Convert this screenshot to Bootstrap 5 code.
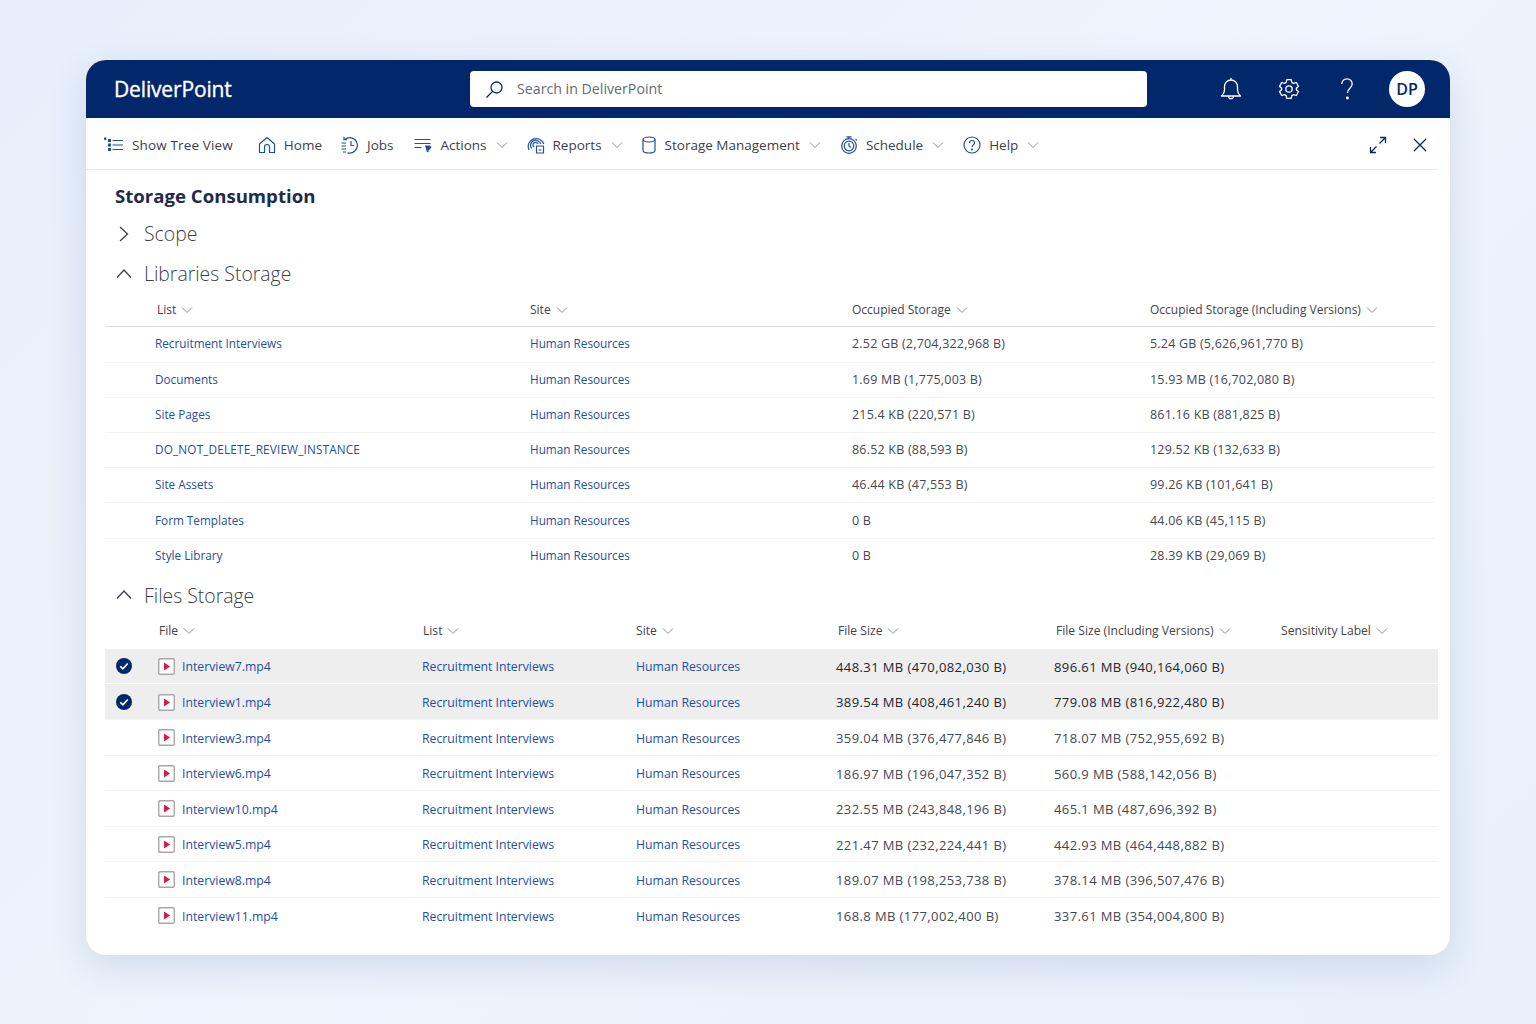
<!DOCTYPE html>
<html lang="en">

<head>
    <meta charset="UTF-8">
    <meta name="viewport" content="width=device-width, initial-scale=1.0">
    <title>DeliverPoint - Storage Consumption</title>
    <link href="https://cdn.jsdelivr.net/npm/bootstrap@5.3.0/dist/css/bootstrap.min.css" rel="stylesheet">
    <style>
        html, body { height: 100%; }
        body {
            margin: 0;
            background: linear-gradient(135deg, #e6effb 0%, #eef4fc 50%, #e7f0fb 100%);
            font-family: "Open Sans", "Noto Sans", "Liberation Sans", sans-serif;
            color: #3a3f4a;
            overflow: hidden;
        }
        .stage { padding: 60px 86px 0; }
        .app-window {
            height: 895px;
            background: #fff;
            border-radius: 20px;
            overflow: hidden;
            box-shadow: 0 12px 36px rgba(60, 95, 150, .16);
        }
        .top-bar { height: 58px; background: #03276b; padding: 0 25px 0 28px; }
        .brand-name { width: 356px; padding-top: 1px; font-size: 21px; font-weight: 500; color: #fff; letter-spacing: -.15px; -webkit-text-stroke: .35px #fff; }
        .search-box {
            width: 677px; height: 36px; background: #fff; border-radius: 4px;
            padding-left: 15px; gap: 13px; font-size: 14.2px; color: #666b73;
        }
        .top-icons { margin-left: auto; gap: 34px; }
        .avatar {
            width: 36px; height: 36px; border-radius: 50%; background: #fff; color: #03276b;
            font-size: 16px; font-weight: 600; margin-left: -4px;
        }
        .tool-bar {
            height: 52px; margin-right: 12px; padding: 3px 10px 0 18px;
            border-bottom: 1px solid #e8e8e8; font-size: 13.5px; color: #3a3f4a;
        }
        .tool-item { gap: 8px; white-space: nowrap; }
        .tree-label { letter-spacing: .14px; }
        .tool-gap-0 { margin-right: 25px; }
        .tool-gap-home { margin-right: 19px; }
        .tool-gap-jobs { margin-right: 21px; }
        .tool-gap-18 { margin-right: 18px; }
        .tool-gap-19 { margin-right: 19px; }
        .drop-caret { margin-left: 1px; }
        .tool-right { margin-left: auto; gap: 25px; }
        .page-body { padding: 0 12px 0 19px; }
        .page-title { margin: 13px 0 0 10px; font-size: 18.6px; line-height: 26px; font-weight: 700; color: #1f2b4a; }
        .section-head { height: 40px; padding-left: 11px; gap: 12px; font-size: 19.4px; font-weight: 300; color: #3c4049; }
        .section-scope { margin-top: 5px; }
        .section-files { margin-top: 2px; }
        .data-grid { table-layout: fixed; margin: 0; font-size: 12px; color: #444952; border-collapse: collapse; }
        .data-grid th { font-weight: 400; vertical-align: middle; padding: 0; white-space: nowrap; color: #3f434c; }
        .data-grid td { vertical-align: middle; padding: 0; white-space: nowrap; border-top: 1px solid #f3f3f3; }
        .lib-grid { width: 1330px; font-size: 12.5px; letter-spacing: .2px; }
        .lib-grid th { height: 32px; font-size: 12px; letter-spacing: 0; border-bottom: 1px solid #dcdcdc; }
        .lib-grid td { height: 35.2px; padding-top: 1px; }
        .lib-grid tr:first-child td { border-top: 0; height: 36.2px; }
        .lib-grid a { font-size: 11.75px; letter-spacing: 0; }
        .lib-grid a.caps-link { letter-spacing: .17px; }
        .file-grid { width: 100%; }
        .file-grid th { height: 33px; font-size: 12.1px; }
        .file-grid td { height: 35.57px; padding-top: 3px; }
        .file-grid td a { font-size: 12.25px; }
        .file-grid td.size-cell { font-size: 13px; letter-spacing: .4px; }
        .sel-row td { background: #eeeeee; border-top: 1px solid #fff; color: #23272e; }
        .data-grid a { color: #1f4f9d; text-decoration: none; }
        .lib-c1 { width: 425px; } .lib-c2 { width: 322px; } .lib-c3 { width: 298px; }
        .file-c0 { width: 53px; } .file-c1 { width: 264px; } .file-c2 { width: 214px; }
        .file-c3 { width: 200px; } .file-c4 { width: 218px; } .file-c5 { width: 226px; }
        .pad-lib { padding-left: 50px !important; }
        .th-shift { padding-left: 2px; }
        .file-grid th.th-shift-1 { padding-left: 1px; }
        .file-grid th.th-shift-2 { padding-left: 2px; }
        .caret-s { margin-left: 5px; vertical-align: 0; }
        .file-grid td.check-cell { padding: 0 0 0 11px; }
        .check-cell svg { display: block; }
        .name-wrap { gap: 7px; }
        .name-wrap svg { margin-top: -2px; }
    </style>
</head>

<body>
    <svg width="0" height="0" class="position-absolute">
        <symbol id="caret" viewBox="0 0 12 8"><path d="M1 1.5 6 6.5l5-5" fill="none" stroke="#8b8f96" stroke-width="1"/></symbol>
        <symbol id="video" viewBox="0 0 17 17"><rect x=".75" y=".75" width="15.5" height="15.5" rx="1.2" fill="#fff" stroke="#a9a5a8" stroke-width="1.4"/><path d="M6 4.6v7.8l6.2-3.9z" fill="#d31f47"/></symbol>
        <symbol id="tick" viewBox="0 0 16 16"><circle cx="8" cy="8" r="8" fill="#03276b"/><path d="M4.300 8.300 6.900 10.800l4.800-5.300" fill="none" stroke="#fff" stroke-width="1.700"/></symbol>
    </svg>
    <div class="stage">
        <div class="app-window">
            <div class="top-bar d-flex align-items-center">
                <div class="brand-name">DeliverPoint</div>
                <div class="search-box d-flex align-items-center">
                    <svg width="19" height="19" viewBox="0 0 19 19" fill="none" stroke="#03276b" stroke-width="1.3"><circle cx="11.5" cy="7.5" r="5.5"/><path d="M7.6 11.4 1.5 17.5"/></svg>
                    <span>Search in DeliverPoint</span>
                </div>
                <div class="top-icons d-flex align-items-center">
                    <svg width="24" height="24" viewBox="0 0 24 24" fill="none" stroke="#fff" stroke-width="1.3"><path d="M2.500 19c2-1.700 3-3.500 3-6V9.500a6.500 6.500 0 0 1 13 0V13c0 2.500 1 4.300 3 6z" stroke-linejoin="round"/><path d="M9.500 19.200a2.500 2.500 0 0 0 5 0M12 1v2"/></svg>
                    <svg width="24" height="24" viewBox="0 0 24 24" fill="none" stroke="#fff" stroke-width="1.3"><circle cx="12" cy="12" r="3.2"/><path d="M9.800 2.600h4.400l.6 2.800 1.700 1 2.800-.9 2.200 3.800-2.100 1.900v1.600l2.100 1.900-2.200 3.800-2.800-.9-1.700 1-.6 2.800H9.800l-.6-2.800-1.700-1-2.800.9-2.200-3.800 2.100-1.900v-1.600L2.500 9.300l2.200-3.800 2.800.9 1.700-1z" stroke-linejoin="round"/></svg>
                    <svg width="24" height="24" viewBox="0 0 24 24" fill="none" stroke="#fff" stroke-width="1.3"><path d="M6.800 7a5.200 5.200 0 0 1 10.400 0c0 4-4.800 4.500-4.800 9"/><circle cx="12.400" cy="21" r=".8" fill="#fff"/></svg>
                    <div class="avatar d-flex align-items-center justify-content-center">DP</div>
                </div>
            </div>
            <div class="tool-bar d-flex align-items-center">
                <div class="tool-item d-flex align-items-center tool-gap-0">
                    <svg width="20" height="16" viewBox="0 0 20 16" fill="none" stroke="#1f4f9d" stroke-width="1.2"><path d="M8.500 3.500H19M8.500 8H19M8.500 12.500H19"/><rect x="0" y="0.500" width="2.400" height="2.400" fill="#1f4f9d" stroke="none"/><rect x="4" y="2" width="3" height="3" fill="#1f4f9d" stroke="none"/><rect x="4" y="6.500" width="3" height="3" fill="#1f4f9d" stroke="none"/><rect x="4" y="11" width="3" height="3" fill="#1f4f9d" stroke="none"/></svg>
                    <span class="tree-label">Show Tree View</span>
                </div>
                <div class="tool-item d-flex align-items-center tool-gap-home">
                    <svg width="18" height="18" viewBox="0 0 18 18" fill="none" stroke="#1f4f9d" stroke-width="1.2"><path d="M1.500 8 9 1.500 16.500 8v8.500h-5V11a2.500 2.500 0 0 0-5 0v5.500h-5z" stroke-linejoin="round"/></svg>
                    <span>Home</span>
                </div>
                <div class="tool-item d-flex align-items-center tool-gap-jobs">
                    <svg width="18" height="18" viewBox="0 0 18 18" fill="none" stroke="#1f4f9d" stroke-width="1.2"><path d="M3.800 3.400A7.700 7.700 0 1 1 6.500 16.800M3 .8v2.900h2.900M10 5v4.500h3.200M.5 7h4.500M.5 10h4.500M.5 13h4.500M2 16h3"/></svg>
                    <span>Jobs</span>
                </div>
                <div class="tool-item d-flex align-items-center tool-gap-19">
                    <svg width="18" height="16" viewBox="0 0 18 16" fill="none" stroke="#1f4f9d" stroke-width="1.200"><path d="M.5 2.500h16M.5 6.500h16M.5 10.500h7"/><path d="M11 8.500h5l1.500 2-3 3v2l-2-1v-1z" fill="#1f4f9d" stroke="none"/></svg>
                    <span>Actions</span>
                    <svg class="drop-caret" width="12" height="8"><use href="#caret"/></svg>
                </div>
                <div class="tool-item d-flex align-items-center tool-gap-18">
                    <svg width="18" height="18" viewBox="0 0 18 18" fill="none" stroke="#1f4f9d" stroke-width="1.200"><path d="M2 14A8 8 0 1 1 16.800 8M4.600 12.500A5.200 5.200 0 1 1 13.800 8M7 11a2.600 2.600 0 1 1 4-3"/><path d="M9.500 10h7v7h-7z" stroke-linejoin="round"/><path d="M11.500 14h3" /></svg>
                    <span>Reports</span>
                    <svg class="drop-caret" width="12" height="8"><use href="#caret"/></svg>
                </div>
                <div class="tool-item d-flex align-items-center tool-gap-19">
                    <svg width="16" height="18" viewBox="0 0 16 18" fill="none" stroke="#1f4f9d" stroke-width="1.200"><ellipse cx="8" cy="3.500" rx="6" ry="2.500"/><path d="M2 3.500v11c0 1.400 2.700 2.500 6 2.500s6-1.100 6-2.500v-11"/></svg>
                    <span>Storage Management</span>
                    <svg class="drop-caret" width="12" height="8"><use href="#caret"/></svg>
                </div>
                <div class="tool-item d-flex align-items-center tool-gap-19">
                    <svg width="18" height="18" viewBox="0 0 18 18" fill="none" stroke="#1f4f9d" stroke-width="1.200"><circle cx="9" cy="10" r="7.300"/><circle cx="9" cy="10" r="4.800"/><path d="M6.500.8h5M9 1v1.800M9 7v3l2 1.500M15.500 2.800l1.500 1.500"/></svg>
                    <span>Schedule</span>
                    <svg class="drop-caret" width="12" height="8"><use href="#caret"/></svg>
                </div>
                <div class="tool-item d-flex align-items-center">
                    <svg width="18" height="18" viewBox="0 0 18 18" fill="none" stroke="#1f4f9d" stroke-width="1.200"><circle cx="9" cy="9" r="8"/><path d="M6.500 7a2.500 2.500 0 0 1 5 0c0 1.800-2.500 2-2.500 4"/><circle cx="9" cy="13.500" r=".5" fill="#1f4f9d"/></svg>
                    <span>Help</span>
                    <svg class="drop-caret" width="12" height="8"><use href="#caret"/></svg>
                </div>
                <div class="tool-right d-flex align-items-center">
                    <svg width="18" height="18" viewBox="0 0 18 18" fill="none" stroke="#03276b" stroke-width="1.300"><path d="M10.500 7.500 16.500 1.500M11 1.500h5.500V7M1.500 16.500 7.500 10.500M1.500 11v5.500H7"/></svg>
                    <svg width="16" height="16" viewBox="0 0 16 16" fill="none" stroke="#03276b" stroke-width="1.300"><path d="M2 2l12 12M14 2 2 14"/></svg>
                </div>
            </div>
            <div class="page-body">
                <h1 class="page-title">Storage Consumption</h1>
                <div class="section-head section-scope d-flex align-items-center">
                    <svg width="16" height="16" viewBox="0 0 16 16" fill="none" stroke="#3c4049" stroke-width="1.300"><path d="M4 1l7.500 7L4 15"/></svg>
                    <span>Scope</span>
                </div>
                <div class="section-head d-flex align-items-center">
                    <svg width="16" height="16" viewBox="0 0 16 16" fill="none" stroke="#3c4049" stroke-width="1.300"><path d="M1 11.500 8 4l7 7.500"/></svg>
                    <span>Libraries Storage</span>
                </div>
                <table class="data-grid lib-grid">
                    <colgroup><col class="lib-c1"><col class="lib-c2"><col class="lib-c3"><col></colgroup>
                    <thead>
                        <tr>
                            <th class="pad-lib"><span class="th-shift">List</span><svg class="caret-s" width="12" height="8"><use href="#caret"/></svg></th>
                            <th>Site<svg class="caret-s" width="12" height="8"><use href="#caret"/></svg></th>
                            <th>Occupied Storage<svg class="caret-s" width="12" height="8"><use href="#caret"/></svg></th>
                            <th>Occupied Storage (Including Versions)<svg class="caret-s" width="12" height="8"><use href="#caret"/></svg></th>
                        </tr>
                    </thead>
                    <tbody>
                        <tr><td class="pad-lib"><a href="#">Recruitment Interviews</a></td><td><a href="#">Human Resources</a></td><td>2.52 GB (2,704,322,968 B)</td><td>5.24 GB (5,626,961,770 B)</td></tr>
                        <tr><td class="pad-lib"><a href="#">Documents</a></td><td><a href="#">Human Resources</a></td><td>1.69 MB (1,775,003 B)</td><td>15.93 MB (16,702,080 B)</td></tr>
                        <tr><td class="pad-lib"><a href="#">Site Pages</a></td><td><a href="#">Human Resources</a></td><td>215.4 KB (220,571 B)</td><td>861.16 KB (881,825 B)</td></tr>
                        <tr><td class="pad-lib"><a class="caps-link" href="#">DO_NOT_DELETE_REVIEW_INSTANCE</a></td><td><a href="#">Human Resources</a></td><td>86.52 KB (88,593 B)</td><td>129.52 KB (132,633 B)</td></tr>
                        <tr><td class="pad-lib"><a href="#">Site Assets</a></td><td><a href="#">Human Resources</a></td><td>46.44 KB (47,553 B)</td><td>99.26 KB (101,641 B)</td></tr>
                        <tr><td class="pad-lib"><a href="#">Form Templates</a></td><td><a href="#">Human Resources</a></td><td>0 B</td><td>44.06 KB (45,115 B)</td></tr>
                        <tr><td class="pad-lib"><a href="#">Style Library</a></td><td><a href="#">Human Resources</a></td><td>0 B</td><td>28.39 KB (29,069 B)</td></tr>
                    </tbody>
                </table>
                <div class="section-head section-files d-flex align-items-center">
                    <svg width="16" height="16" viewBox="0 0 16 16" fill="none" stroke="#3c4049" stroke-width="1.300"><path d="M1 11.500 8 4l7 7.500"/></svg>
                    <span>Files Storage</span>
                </div>
                <table class="data-grid file-grid">
                    <colgroup><col class="file-c0"><col class="file-c1"><col class="file-c2"><col class="file-c3"><col class="file-c4"><col class="file-c5"><col></colgroup>
                    <thead>
                        <tr>
                            <th></th>
                            <th class="th-shift-1">File<svg class="caret-s" width="12" height="8"><use href="#caret"/></svg></th>
                            <th class="th-shift-1">List<svg class="caret-s" width="12" height="8"><use href="#caret"/></svg></th>
                            <th>Site<svg class="caret-s" width="12" height="8"><use href="#caret"/></svg></th>
                            <th class="th-shift-2">File Size<svg class="caret-s" width="12" height="8"><use href="#caret"/></svg></th>
                            <th class="th-shift-2">File Size (Including Versions)<svg class="caret-s" width="12" height="8"><use href="#caret"/></svg></th>
                            <th class="th-shift-1">Sensitivity Label<svg class="caret-s" width="12" height="8"><use href="#caret"/></svg></th>
                        </tr>
                    </thead>
                    <tbody>
                        <tr class="sel-row"><td class="check-cell"><svg width="16" height="16"><use href="#tick"/></svg></td><td><div class="name-wrap d-flex align-items-center"><svg width="17" height="17"><use href="#video"/></svg><a href="#">Interview7.mp4</a></div></td><td><a href="#">Recruitment Interviews</a></td><td><a href="#">Human Resources</a></td><td class="size-cell">448.31 MB (470,082,030 B)</td><td class="size-cell">896.61 MB (940,164,060 B)</td><td></td></tr>
                        <tr class="sel-row"><td class="check-cell"><svg width="16" height="16"><use href="#tick"/></svg></td><td><div class="name-wrap d-flex align-items-center"><svg width="17" height="17"><use href="#video"/></svg><a href="#">Interview1.mp4</a></div></td><td><a href="#">Recruitment Interviews</a></td><td><a href="#">Human Resources</a></td><td class="size-cell">389.54 MB (408,461,240 B)</td><td class="size-cell">779.08 MB (816,922,480 B)</td><td></td></tr>
                        <tr><td></td><td><div class="name-wrap d-flex align-items-center"><svg width="17" height="17"><use href="#video"/></svg><a href="#">Interview3.mp4</a></div></td><td><a href="#">Recruitment Interviews</a></td><td><a href="#">Human Resources</a></td><td class="size-cell">359.04 MB (376,477,846 B)</td><td class="size-cell">718.07 MB (752,955,692 B)</td><td></td></tr>
                        <tr><td></td><td><div class="name-wrap d-flex align-items-center"><svg width="17" height="17"><use href="#video"/></svg><a href="#">Interview6.mp4</a></div></td><td><a href="#">Recruitment Interviews</a></td><td><a href="#">Human Resources</a></td><td class="size-cell">186.97 MB (196,047,352 B)</td><td class="size-cell">560.9 MB (588,142,056 B)</td><td></td></tr>
                        <tr><td></td><td><div class="name-wrap d-flex align-items-center"><svg width="17" height="17"><use href="#video"/></svg><a href="#">Interview10.mp4</a></div></td><td><a href="#">Recruitment Interviews</a></td><td><a href="#">Human Resources</a></td><td class="size-cell">232.55 MB (243,848,196 B)</td><td class="size-cell">465.1 MB (487,696,392 B)</td><td></td></tr>
                        <tr><td></td><td><div class="name-wrap d-flex align-items-center"><svg width="17" height="17"><use href="#video"/></svg><a href="#">Interview5.mp4</a></div></td><td><a href="#">Recruitment Interviews</a></td><td><a href="#">Human Resources</a></td><td class="size-cell">221.47 MB (232,224,441 B)</td><td class="size-cell">442.93 MB (464,448,882 B)</td><td></td></tr>
                        <tr><td></td><td><div class="name-wrap d-flex align-items-center"><svg width="17" height="17"><use href="#video"/></svg><a href="#">Interview8.mp4</a></div></td><td><a href="#">Recruitment Interviews</a></td><td><a href="#">Human Resources</a></td><td class="size-cell">189.07 MB (198,253,738 B)</td><td class="size-cell">378.14 MB (396,507,476 B)</td><td></td></tr>
                        <tr><td></td><td><div class="name-wrap d-flex align-items-center"><svg width="17" height="17"><use href="#video"/></svg><a href="#">Interview11.mp4</a></div></td><td><a href="#">Recruitment Interviews</a></td><td><a href="#">Human Resources</a></td><td class="size-cell">168.8 MB (177,002,400 B)</td><td class="size-cell">337.61 MB (354,004,800 B)</td><td></td></tr>
                    </tbody>
                </table>
            </div>
        </div>
    </div>
    <script src="https://cdn.jsdelivr.net/npm/bootstrap@5.3.0/dist/js/bootstrap.bundle.min.js"></script>
</body>

</html>
